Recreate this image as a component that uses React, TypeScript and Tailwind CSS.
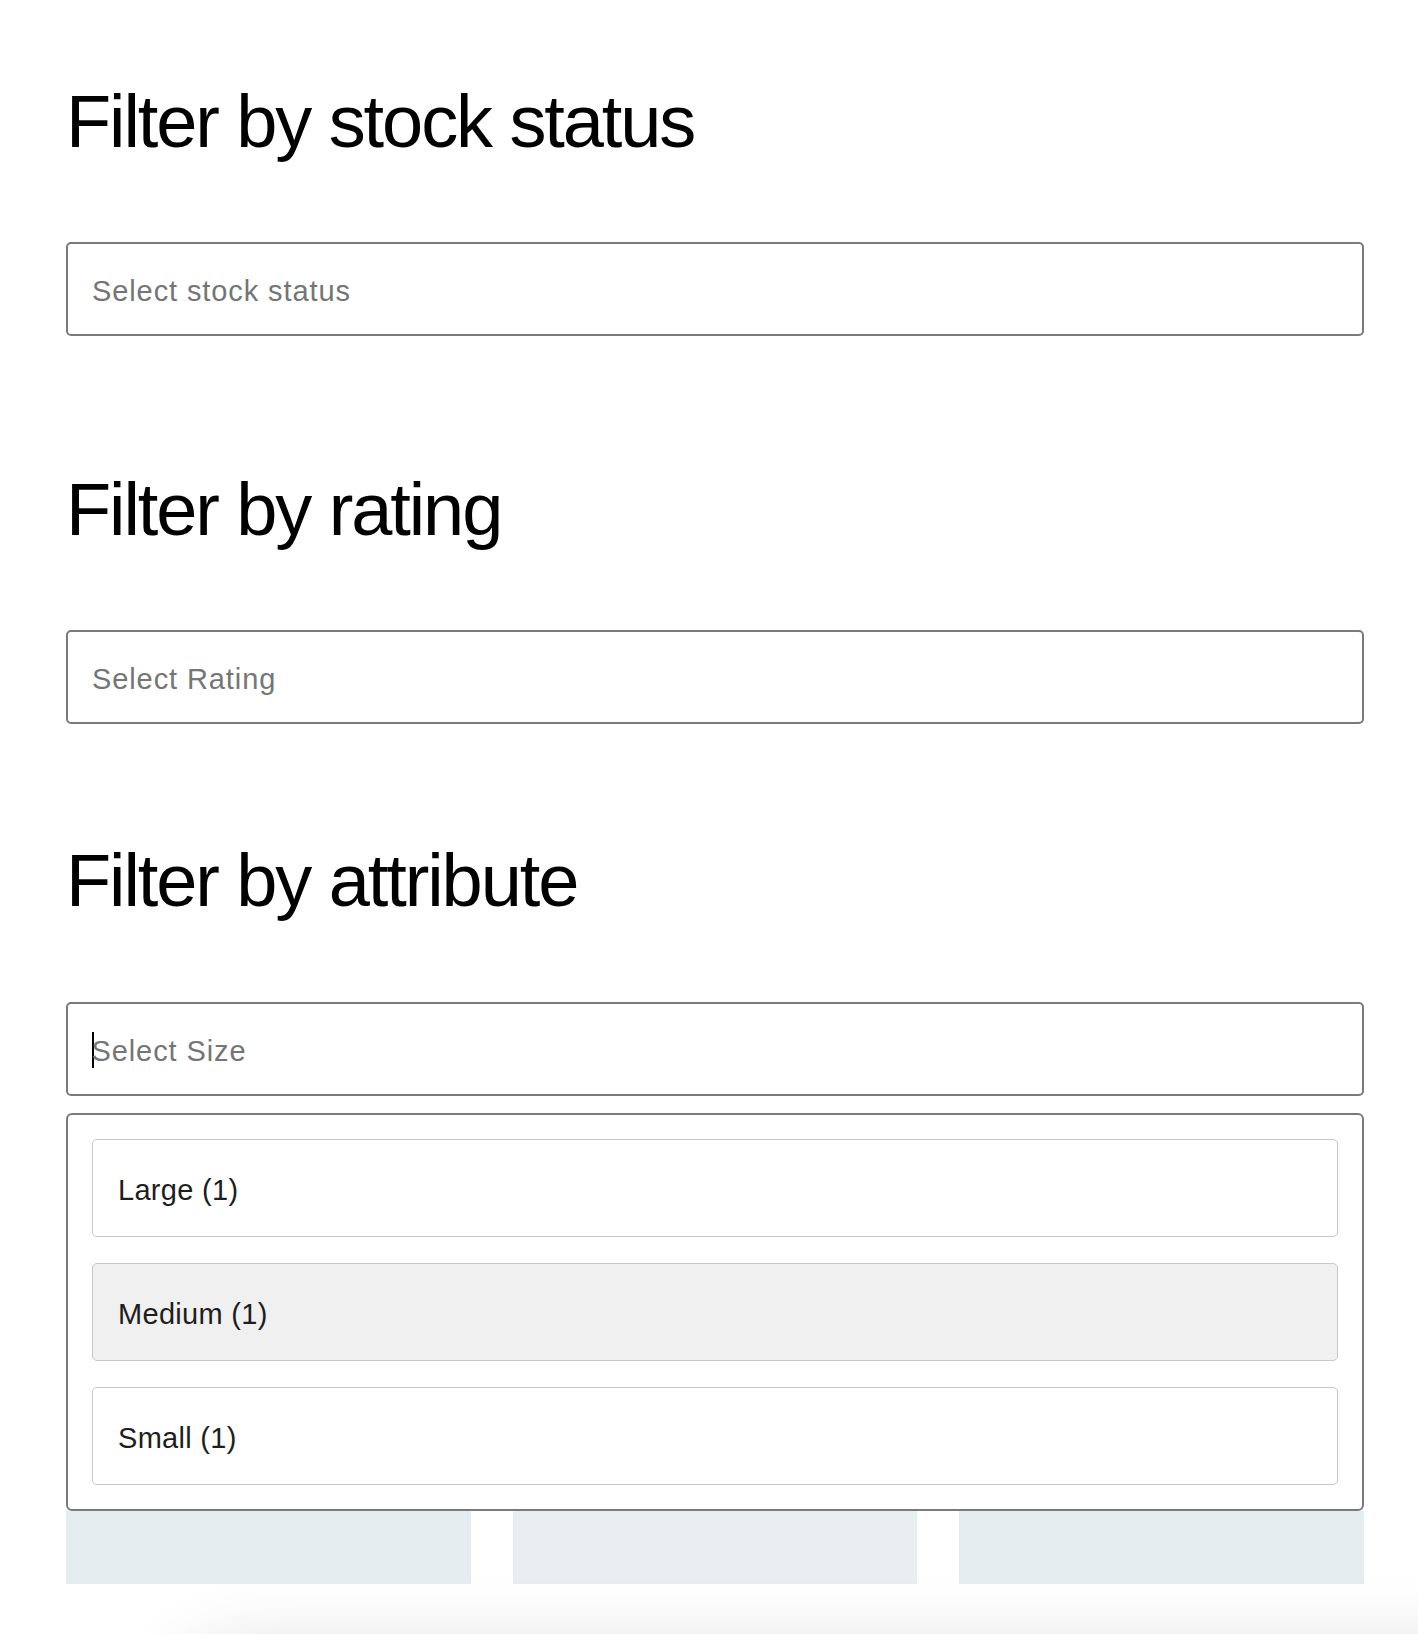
import React from 'react'

type TOption = {
  label: string
  count: number
  active?: boolean
}

const sizes: TOption[] = [
  {label: 'Large', count: 1},
  {label: 'Medium', count: 1, active: true},
  {label: 'Small', count: 1},
]

function Heading({children}: {children: React.ReactNode}) {
  return (
    <h2 className="text-[74px] leading-[74px] tracking-[-2.1px] font-normal text-black">
      {children}
    </h2>
  )
}

function FakeSelect({placeholder, focused}: {placeholder: string; focused?: boolean}) {
  return (
    <div className="flex items-center h-[94px] rounded-[5px] border-2 border-[#7a7a7a] bg-white pl-[24px] pt-[5px]">
      {focused && <span className="w-[1.5px] h-[36px] bg-black -mr-[2px] -mt-[4px]" />}
      <span className="text-[29px] tracking-[0.9px] text-[#757575]">{placeholder}</span>
    </div>
  )
}

function App() {
  return (
    <div
      className="relative min-h-[1634px] overflow-hidden bg-white"
      style={{fontFamily: '"Liberation Sans", Arial, sans-serif'}}
    >
      <div className="ml-[66px] w-[1298px] pt-[85px]">
        <Heading>Filter by stock status</Heading>
        <div className="mt-[83px]">
          <FakeSelect placeholder="Select stock status" />
        </div>

        <div className="mt-[137px]">
          <Heading>Filter by rating</Heading>
        </div>
        <div className="mt-[83px]">
          <FakeSelect placeholder="Select Rating" />
        </div>

        <div className="mt-[120px]">
          <Heading>Filter by attribute</Heading>
        </div>
        <div className="mt-[84px]">
          <FakeSelect placeholder="Select Size" focused />
        </div>

        <div className="mt-[17px] rounded-[6px] border-2 border-[#7a7a7a] bg-white p-[24px] flex flex-col gap-[26px]">
          {sizes.map((size) => {
            return (
              <div
                key={size.label}
                className={`flex items-center h-[98px] rounded-[5px] border-[1.5px] border-[#c8c8c8] pl-[25px] pt-[5px] text-[29px] tracking-[0.3px] text-[#1e1e1e] ${
                  size.active ? 'bg-[#f0f0f0]' : 'bg-white'
                }`}
              >
                {size.label} ({size.count})
              </div>
            )
          })}
        </div>

        <div className="grid grid-cols-3 gap-[42px]">
          <div className="h-[73px] bg-[#e6edf0]" />
          <div className="h-[73px] bg-[#e8eef1]" />
          <div className="h-[73px] bg-[#e6edf0]" />
        </div>
      </div>

      {/* soft shadow of something sitting below the fold */}
      <div className="absolute top-[1650px] left-[180px] w-[1500px] h-[120px] rounded-[60px] bg-white shadow-[0_0_80px_rgba(0,0,0,0.14)]" />
    </div>
  )
}

export default App
